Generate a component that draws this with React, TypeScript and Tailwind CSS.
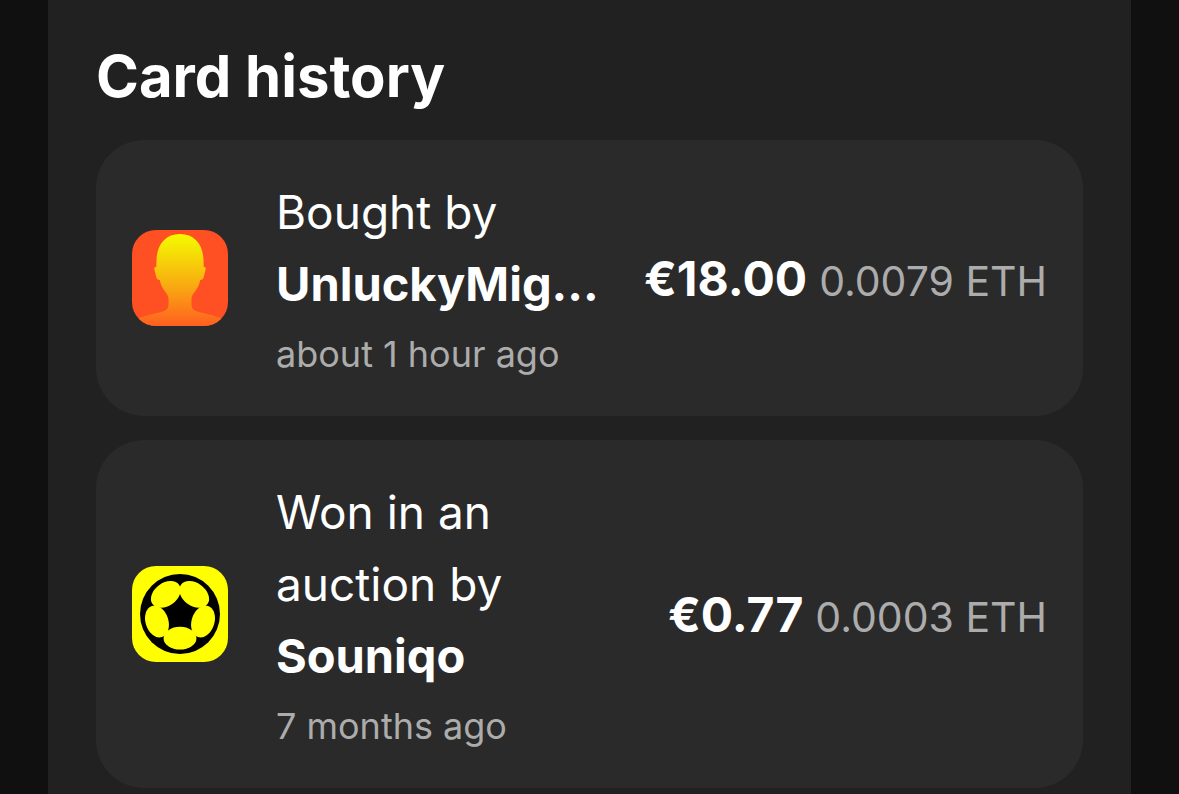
import React from 'react';

interface HistoryItem {
  id: number;
  action: string;
  user: string;
  time: string;
  price: string;
  eth: string;
  avatar: React.ReactNode;
}

const SilhouetteAvatar: React.FC = () => (
  <svg viewBox="0 0 96 96" className="size-24 shrink-0 rounded-3xl" aria-hidden="true">
    <defs>
      <linearGradient id="head" x1="0" y1="4" x2="0" y2="96" gradientUnits="userSpaceOnUse">
        <stop offset="0" stopColor="#f6fa00" />
        <stop offset="0.2" stopColor="#f5e006" />
        <stop offset="0.6" stopColor="#f9a412" />
        <stop offset="1" stopColor="#ff5f20" />
      </linearGradient>
    </defs>
    <rect width="96" height="96" fill="#ff5023" />
    <path
      fill="url(#head)"
      d="M48 4C33 4 25 15 24.5 30L24.3 37C22.5 36.500 22 37.500 22.500 40L24 46C24.500 48.500 25.500 50 27.700 50C28.500 54 30 57 32 60C34 63.500 36.500 65 36.500 69V74C36.500 77.500 35.500 79.500 32 81C25 83.500 13 85 7 88.500C3 90.500 0 93 0 96H96C96 93 93 90.500 89 88.500C83 85 71 83.500 64 81C60.500 79.500 59.500 77.500 59.500 74V69C59.500 65 62 63.500 64 60C66 57 67.500 54 68.300 50C70.500 50 71.500 48.500 72 46L73.500 40C74 37.500 73.500 36.500 71.700 37L71.500 30C71 15 63 4 48 4Z"
    />
  </svg>
);

const BallAvatar: React.FC = () => (
  <svg viewBox="0 0 96 96" className="size-24 shrink-0 rounded-3xl" aria-hidden="true">
    <rect width="96" height="96" fill="#ffff00" />
    <circle cx="48" cy="48" r="40" fill="#000" />
    {[0, 72, 144, 216, 288].map((angle) => (
      <ellipse
        key={angle}
        cx="48"
        cy="72.2"
        rx="16.4"
        ry="11.4"
        fill="#ffff00"
        transform={`rotate(${angle} 48 48)`}
      />
    ))}
  </svg>
);

const HISTORY: HistoryItem[] = [
  {
    id: 1,
    action: 'Bought by',
    user: 'UnluckyMig...',
    time: 'about 1 hour ago',
    price: '€18.00',
    eth: '0.0079 ETH',
    avatar: <SilhouetteAvatar />,
  },
  {
    id: 2,
    action: 'Won in an auction by',
    user: 'Souniqo',
    time: '7 months ago',
    price: '€0.77',
    eth: '0.0003 ETH',
    avatar: <BallAvatar />,
  },
];

const App: React.FC = () => {
  return (
    <div className="min-h-screen bg-[#101010] px-12 font-['Inter','Liberation_Sans',sans-serif] text-white">
      <main className="min-h-screen bg-[#212121] px-12 pt-9">
        <h1 className="mb-6 text-[58px] leading-[80px] font-bold">Card history</h1>

        <ul className="flex flex-col gap-6">
          {HISTORY.map((item) => (
            <li key={item.id} className="flex items-center rounded-[48px] bg-[#2a2a2a] p-9">
              {item.avatar}
              <div className="ml-12 min-w-0 flex-1">
                <p className="text-[46px] leading-[72px]">{item.action}</p>
                <p className="truncate text-[47px] leading-[72px] font-bold">{item.user}</p>
                <p className="pt-2 text-4xl leading-[52px] text-[#acacac]">{item.time}</p>
              </div>
              <div className="ml-9 flex shrink-0 items-baseline gap-3 pt-2">
                <span className="text-5xl font-bold">{item.price}</span>
                <span className="text-[41px] text-[#acacac]">{item.eth}</span>
              </div>
            </li>
          ))}
        </ul>
      </main>
    </div>
  );
};

export default App;
